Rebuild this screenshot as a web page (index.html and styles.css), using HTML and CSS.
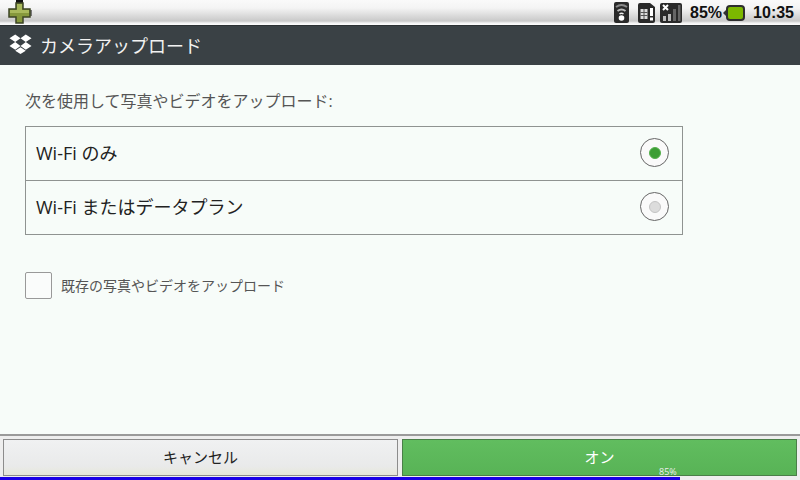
FILE: index.html
```html
<!DOCTYPE html>
<html>
<head>
<meta name="viewport" content="width=device-width, initial-scale=1">
<title>カメラアップロード</title>
<link rel="stylesheet" href="styles.css">
</head>
<body>
<div class="statusbar">
  <svg class="plus" width="32" height="25" viewBox="0 0 32 25">
    <rect x="15" y="0" width="7" height="4" fill="#111"/>
    <rect x="29" y="10" width="2" height="6" fill="#777"/>
    <path d="M15 3h7v6h7v8h-7v6h-7v-6H8V9h7z" fill="#86983c" stroke="#3d4425" stroke-width="1.500"/>
    <path d="M16 4h5v6h-5zM9 10h19v3H9z" fill="#a9b95c"/>
  </svg>
  <div class="status-right">
    <svg class="sicon wifi" width="15" height="21" viewBox="0 0 15 21">
      <rect x="0" y="0" width="15" height="21" rx="2" fill="#2a2a2a"/>
      <path d="M2 5q5.500-4 11 0" fill="none" stroke="#8a8a8a" stroke-width="2"/>
      <path d="M3.500 9q4-3 8 0" fill="none" stroke="#bbb" stroke-width="2"/>
      <path d="M5.500 12q2-1.500 4 0" fill="none" stroke="#eee" stroke-width="1.500"/>
      <circle cx="7.500" cy="16" r="2.800" fill="#fff"/>
    </svg>
    <svg class="sicon sim" width="17" height="20" viewBox="0 0 17 20">
      <path d="M0 2q0-2 2-2h10l5 4v14q0 2-2 2H2q-2 0-2-2z" fill="#2a2a2a"/>
      <rect x="2.500" y="6" width="7" height="10" fill="#ddd"/>
      <path d="M2.500 9.500h7M2.500 12.500h7M6 6v10" stroke="#555"/>
      <rect x="12" y="5" width="3" height="8" fill="#fff"/>
      <rect x="12" y="14.500" width="3" height="3" fill="#fff"/>
    </svg>
    <svg class="sicon sig" width="22" height="20" viewBox="0 0 22 20">
      <rect x="0" y="0" width="22" height="20" rx="2" fill="#2a2a2a"/>
      <path d="M3 2l5 5M8 2l-5 5" stroke="#fff" stroke-width="2"/>
      <path d="M3 13h3v5H3zM8 11h3v7H8z" fill="#bbb"/>
      <path d="M13 6h3v12h-3zM18 2h2.500v16H18z" fill="#666"/>
    </svg>
    <span class="pct">85%</span>
    <svg class="batt" width="22" height="16" viewBox="0 0 22 16">
      <path d="M0 8l4-4v8z" fill="#333"/>
      <rect x="3" y="0" width="19" height="16" rx="4" fill="#2e2e2e"/>
      <rect x="5" y="2" width="15" height="12" rx="2" fill="#7cb800"/>
    </svg>
    <span class="clock">10:35</span>
  </div>
</div>

<div class="titlebar">
  <svg class="dropbox" width="23" height="22" viewBox="0 0 24 22">
    <path d="M6.500 1L0.500 5l6 4 5.500-4zM17.500 1L12 5l5.500 4 6-4zM0.500 13l6 4 5.500-4-5.500-4zM23.500 13l-6 4L12 13l5.500-4zM6.500 18l5.500 3.500 5.500-3.500-5.500-3.500z" fill="#fff"/>
  </svg>
  <span class="title">カメラアップロード</span>
</div>

<div class="content">
  <p class="intro">次を使用して写真やビデオをアップロード:</p>
  <div class="options">
    <div class="option">
      <span class="option-label">Wi-Fi のみ</span>
      <span class="radio"><span class="dot on"></span></span>
    </div>
    <div class="option">
      <span class="option-label">Wi-Fi またはデータプラン</span>
      <span class="radio"><span class="dot"></span></span>
    </div>
  </div>
  <div class="check-row">
    <span class="checkbox"></span>
    <span class="check-label">既存の写真やビデオをアップロード</span>
  </div>
</div>

<div class="buttons">
  <div class="btn cancel">キャンセル</div>
  <div class="btn ok">オン</div>
</div>
<div class="progress"><div class="progress-fill" style="width:85%"></div></div>
<span class="progress-label">85%</span>
</body>
</html>
```
FILE: styles.css
```css
* {
  box-sizing: border-box;
}
html, body {
  height: 100%;
}
body {
  margin: 0;
  width: 800px;
  height: 480px;
  overflow: hidden;
  position: relative;
  display: flex;
  flex-direction: column;
  background: #f7fcf9;
  color: #333;
  font-family: "Open Sans", "Noto Sans CJK JP", sans-serif;
}

.statusbar {
  height: 25px;
  display: flex;
  justify-content: space-between;
  background: linear-gradient(#fafafa 0, #f4f4f4 8px, #c9c9c9 21px, #f2f2f2 23px, #fff 25px);
}
.plus {
  margin-left: 1px;
}
.status-right {
  display: flex;
  align-items: center;
  padding-right: 6px;
  height: 25px;
  color: #111;
  font-family: "Liberation Sans", sans-serif;
  font-weight: bold;
  font-size: 16px;
}
.wifi {
  margin-right: 9px;
}
.sim {
  margin-right: 5px;
}
.pct {
  margin-left: 8px;
}
.batt {
  margin-left: 1px;
}
.clock {
  margin-left: 8px;
}

.titlebar {
  height: 40px;
  display: flex;
  align-items: center;
  padding-left: 9px;
  background: #3a4145;
  border-top: 1px solid #2c3134;
  color: #f2f2f2;
}
.dropbox {
  margin-bottom: 3px;
}
.title {
  margin-left: 8px;
  font-size: 18px;
  margin-top: -1px;
}

.content {
  flex: 1;
  padding: 26px 25px 0;
}
.intro {
  margin: 0;
  font-size: 16px;
  line-height: 20px;
  color: #555;
}
.options {
  margin-top: 15px;
  width: 658px;
  border: 1px solid #8f9391;
}
.option {
  height: 53px;
  display: flex;
  align-items: center;
  justify-content: space-between;
  padding: 0 13px 2px 10px;
  font-size: 18px;
  color: #222;
}
.option + .option {
  height: 54px;
  border-top: 1px solid #8f9391;
}
.option-label {
  margin-bottom: 2px;
}
.radio {
  width: 29px;
  height: 29px;
  border: 1.500px solid #666;
  border-radius: 50%;
  background: #fafafa;
  display: flex;
  align-items: center;
  justify-content: center;
}
.dot {
  width: 12px;
  height: 12px;
  border-radius: 50%;
  background: #dcdcdc;
  border: 1px solid #c4c4c4;
}
.dot.on {
  background: #3d9e35;
  border-color: #57b04e;
}
.check-row {
  margin-top: 37px;
  display: flex;
  align-items: center;
}
.checkbox {
  width: 27px;
  height: 27px;
  border: 1.500px solid #999;
  border-radius: 2px;
  background: #fafcfb;
}
.check-label {
  margin-left: 9px;
  margin-bottom: 2px;
  font-size: 14px;
  color: #555;
}

.buttons {
  height: 43px;
  display: flex;
  gap: 4px;
  padding: 3px 3px 0;
  border-top: 2px solid #9a9a9a;
  background: #eeeeee;
}
.btn {
  flex: 1;
  height: 37px;
  display: flex;
  align-items: center;
  justify-content: center;
  padding-bottom: 3px;
  font-size: 15px;
}
.cancel {
  background: linear-gradient(#f0f1f2, #e9eaea 75%, #e6e7d9);
  border: 1px solid #8c8c8c;
  color: #222;
}
.ok {
  background: linear-gradient(#61bd5f, #58b356);
  border: 1px solid #4a7f48;
  color: #fff;
}

.progress {
  height: 3px;
  background: #eeeeee;
}
.progress-fill {
  height: 100%;
  background: #1a00e6;
}
.progress-label {
  position: absolute;
  left: 659px;
  top: 468px;
  font-size: 9px;
  line-height: 8px;
  color: #eee;
}
```
